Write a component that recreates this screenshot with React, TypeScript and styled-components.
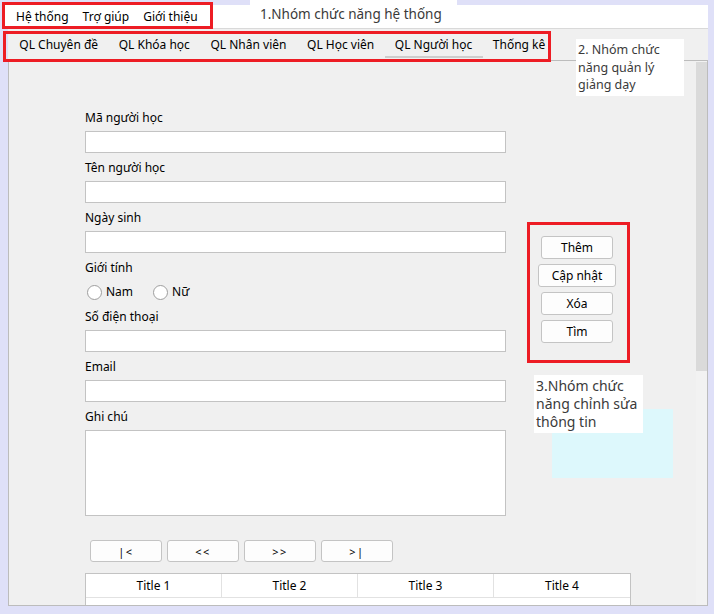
import React from 'react';
import styled, { createGlobalStyle } from 'styled-components';

const Global = createGlobalStyle`
  html, body { margin: 0; padding: 0; background: #dfe0f8; }
  body { font-family: "Noto Sans", "Segoe UI", sans-serif; }
  * { box-sizing: border-box; }
`;

const Screen = styled.div`
  position: relative;
  width: 714px;
  height: 614px;
  background: #dfe0f8;
  padding: 5px 6px 8px 4px;
  display: flex;
  flex-direction: column;
  overflow: hidden;
  font-family: "Noto Sans", sans-serif;
  font-size: 12px;
  color: #000;
`;

const MenuBar = styled.div`
  height: 24px;
  flex: none;
  background: #fff;
  border-bottom: 1px solid #d9d9d9;
  display: flex;
  align-items: center;
  padding-left: 5px;
`;

const MenuItem = styled.div`
  padding: 0 7px;
  line-height: 16px;
  white-space: nowrap;
`;

const TabStrip = styled.div`
  height: 31px;
  flex: none;
  margin-left: 4px;
  background: #f0f0f0;
  display: flex;
  align-items: flex-start;
  padding-left: 1px;
`;

const Tab = styled.div<{ $active?: boolean }>`
  height: 29px;
  padding: 4px 10.3px 0;
  display: flex;
  align-items: center;
  white-space: nowrap;
  border-bottom: 2px solid ${p => (p.$active ? '#cdcdcd' : 'transparent')};
`;

const Panel = styled.div`
  flex: 1;
  min-height: 0;
  margin-left: 4px;
  border: 1px solid #bcbcbc;
  background: #f0f0f0;
  display: flex;
  overflow: hidden;
`;

const Content = styled.div`
  flex: 1;
  padding: 49px 0 0 76px;
  display: flex;
  flex-direction: column;
`;

const ScrollBar = styled.div`
  width: 11px;
  flex: none;
  background: #f2f2f2;
  display: flex;
  flex-direction: column;
  padding-top: 1px;
`;

const ScrollThumb = styled.div`
  height: 309px;
  background: #dadada;
`;

const TopRow = styled.div`
  display: flex;
  align-items: flex-start;
`;

const Form = styled.div`
  width: 421px;
  display: flex;
  flex-direction: column;
`;

const Label = styled.div`
  line-height: 16px;
  height: 16px;
  margin-bottom: 5px;
  white-space: nowrap;
`;

const TextInput = styled.div<{ $tall?: boolean }>`
  height: ${p => (p.$tall ? '86px' : '22px')};
  background: #fff;
  border: 1px solid #c3c3c3;
  margin-bottom: 7px;
`;

const RadioRow = styled.div`
  height: 20px;
  margin: 1px 0 7px 2px;
  display: flex;
  align-items: center;
`;

const RadioOption = styled.label`
  display: flex;
  align-items: center;
  margin-right: 20px;
  line-height: 16px;
`;

const RadioCircle = styled.span`
  width: 15px;
  height: 15px;
  border-radius: 50%;
  border: 1px solid #9e9e9e;
  background: #fff;
  margin-right: 4px;
  flex: none;
`;

const Actions = styled.div`
  width: 78px;
  margin: 126px 0 0 32px;
  display: flex;
  flex-direction: column;
  align-items: center;
  gap: 5px;
`;

const Button = styled.div<{ $w?: number; $h?: number; $small?: boolean }>`
  width: ${p => p.$w ?? 72}px;
  height: ${p => p.$h ?? 23}px;
  background: #fdfdfd;
  border: 1px solid #c4c4c4;
  border-radius: 3px;
  display: flex;
  align-items: center;
  justify-content: center;
  font-size: ${p => (p.$small ? '11px' : '12px')};
  letter-spacing: ${p => (p.$small ? '1.5px' : '0')};
  white-space: nowrap;
`;

const NavRow = styled.div`
  display: flex;
  gap: 5px;
  margin: 17px 0 0 5px;
`;

const Table = styled.div`
  width: 546px;
  margin-top: 11px;
  background: #fff;
  border: 1px solid #c3c3c3;
  border-bottom: none;
  display: grid;
  grid-template-columns: repeat(4, 1fr);
  grid-auto-rows: 24px 20px;
`;

const HeadCell = styled.div`
  display: flex;
  align-items: center;
  justify-content: center;
  border-right: 1px solid #e2e2e2;
  border-bottom: 1px solid #e2e2e2;
  &:nth-child(4) { border-right: none; }
`;

const BodyCell = styled.div`
  background: #fff;
`;

const RedBox = styled.div<{ $x: number; $y: number; $w: number; $h: number }>`
  position: absolute;
  left: ${p => p.$x}px;
  top: ${p => p.$y}px;
  width: ${p => p.$w}px;
  height: ${p => p.$h}px;
  border: 3px solid #ed1c24;
  pointer-events: none;
`;

const Note = styled.div<{ $x: number; $y: number; $w: number; $h: number; $size: number; $lh: number }>`
  position: absolute;
  left: ${p => p.$x}px;
  top: ${p => p.$y}px;
  width: ${p => p.$w}px;
  height: ${p => p.$h}px;
  background: #fff;
  color: #3a3a3a;
  font-size: ${p => p.$size}px;
  line-height: ${p => p.$lh}px;
  padding: 2px 2px 0 2px;
`;

const Cyan = styled.div`
  position: absolute;
  left: 552px;
  top: 409px;
  width: 121px;
  height: 69px;
  background: #ddf8fc;
`;

const fields1 = ['Mã người học', 'Tên người học', 'Ngày sinh'];
const fields2 = ['Số điện thoại', 'Email'];

export default function App() {
  return (
    <>
      <Global />
      <Screen>
        <MenuBar>
          <MenuItem>Hệ thống</MenuItem>
          <MenuItem>Trợ giúp</MenuItem>
          <MenuItem>Giới thiệu</MenuItem>
        </MenuBar>
        <TabStrip>
          <Tab>QL Chuyên đề</Tab>
          <Tab>QL Khóa học</Tab>
          <Tab>QL Nhân viên</Tab>
          <Tab>QL Học viên</Tab>
          <Tab $active>QL Người học</Tab>
          <Tab>Thống kê</Tab>
        </TabStrip>
        <Panel>
          <Content>
            <TopRow>
              <Form>
                {fields1.map(f => (
                  <React.Fragment key={f}>
                    <Label>{f}</Label>
                    <TextInput />
                  </React.Fragment>
                ))}
                <Label>Giới tính</Label>
                <RadioRow>
                  <RadioOption><RadioCircle />Nam</RadioOption>
                  <RadioOption><RadioCircle />Nữ</RadioOption>
                </RadioRow>
                {fields2.map(f => (
                  <React.Fragment key={f}>
                    <Label>{f}</Label>
                    <TextInput />
                  </React.Fragment>
                ))}
                <Label>Ghi chú</Label>
                <TextInput $tall />
              </Form>
              <Actions>
                <Button>Thêm</Button>
                <Button $w={78}>Cập nhật</Button>
                <Button>Xóa</Button>
                <Button>Tìm</Button>
              </Actions>
            </TopRow>
            <NavRow>
              <Button $h={22} $small>|&lt;</Button>
              <Button $h={22} $small>&lt;&lt;</Button>
              <Button $h={22} $small>&gt;&gt;</Button>
              <Button $h={22} $small>&gt;|</Button>
            </NavRow>
            <Table>
              <HeadCell>Title 1</HeadCell>
              <HeadCell>Title 2</HeadCell>
              <HeadCell>Title 3</HeadCell>
              <HeadCell>Title 4</HeadCell>
              <BodyCell />
              <BodyCell />
              <BodyCell />
              <BodyCell />
            </Table>
          </Content>
          <ScrollBar>
            <ScrollThumb />
          </ScrollBar>
        </Panel>

        <RedBox $x={2} $y={2} $w={211} $h={27} />
        <RedBox $x={3} $y={31} $w={548} $h={31} />
        <RedBox $x={527} $y={222} $w={103} $h={141} />

        <Note $x={250} $y={0} $w={207} $h={28} $size={13.5} $lh={24} style={{ paddingLeft: 10 }}>
          1.Nhóm chức năng hệ thống
        </Note>
        <Note $x={576} $y={39} $w={108} $h={57} $size={12.5} $lh={17.5}>
          2. Nhóm chức năng quản lý giảng dạy
        </Note>
        <Cyan />
        <Note $x={534} $y={375} $w={109} $h={58} $size={14} $lh={18}>
          3.Nhóm chức năng chỉnh sửa thông tin
        </Note>
      </Screen>
    </>
  );
}
